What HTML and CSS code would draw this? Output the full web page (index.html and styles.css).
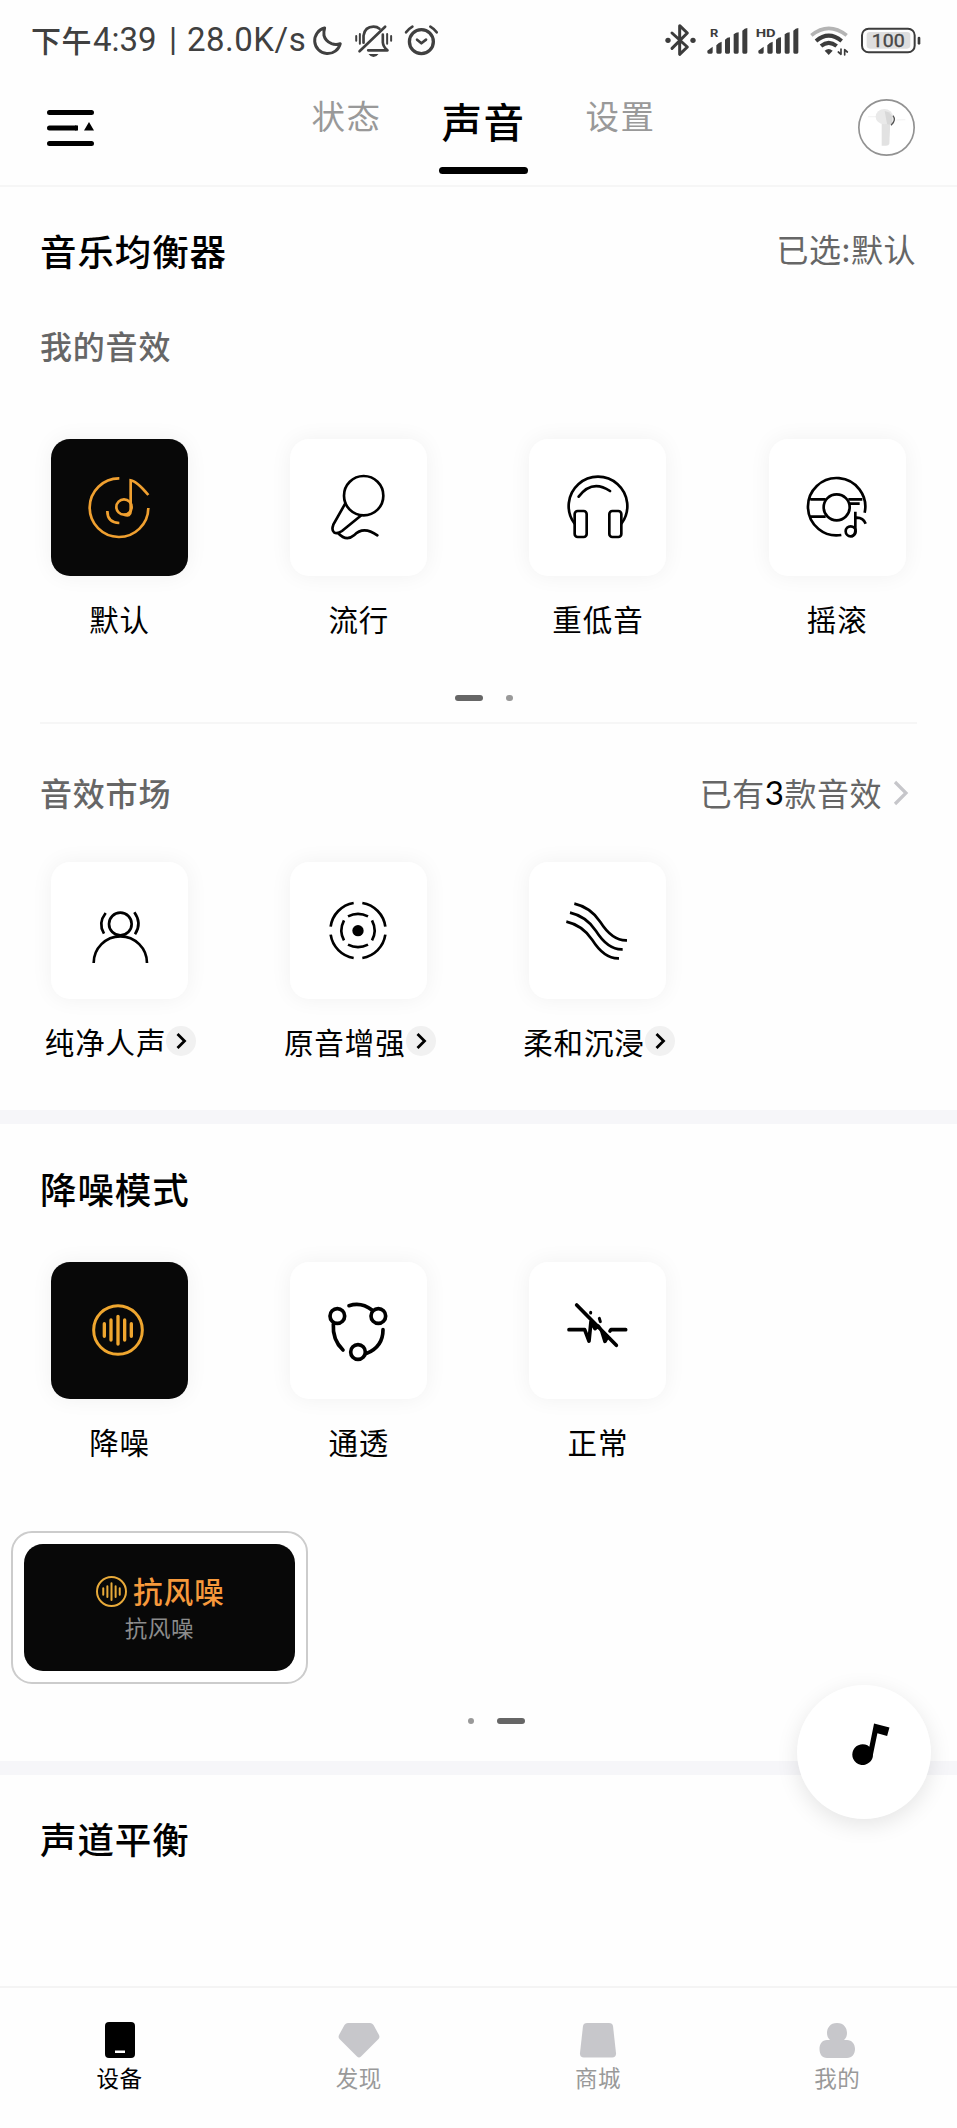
FILE: index.html
```html
<!DOCTYPE html>
<html lang="zh-CN">
<head>
<meta charset="utf-8">
<title>声音</title>
<link rel="stylesheet" href="styles.css">
</head>
<body>
<div class="app">
  <div class="status">
    <div class="status-left"><span class="status-cjk">下午</span><span class="status-time">4:39</span><span class="status-bar">|</span><span class="status-rate">28.0K/s</span></div>
    <svg class="status-modes" viewBox="930 60 400 120" fill="none" stroke="#404040" stroke-width="9" stroke-linecap="round" stroke-linejoin="round">
      <path d="M974 84A39 39 0 1 0 1021 131Q1008 136 995 131Q976 123 972 106Q971 93 974 84Z"/>
      <path d="M1079 154L1156 80" stroke-width="8"/>
      <path d="M1091 128V107Q1095 80 1121 80Q1132 80 1139 86M1149 104V127Q1150 140 1163 151H1105" stroke-width="8"/>
      <path d="M1106 162H1136Q1130 171 1121 171Q1112 171 1106 162Z" fill="#404040" stroke="none"/>
      <path d="M1069 108V122M1080 102V131M1162 102V131M1174 108V122" stroke-width="6"/>
      <circle cx="1265" cy="125" r="36" stroke-width="10"/>
      <path d="M1252 119L1265 130L1279 119M1219 97Q1226 87 1238 80M1292 80Q1304 87 1311 97" stroke-width="8"/>
    </svg>
    <svg class="status-system" viewBox="560 60 780 120" fill="none" stroke="#3c3c3c" stroke-linecap="round" stroke-linejoin="round">
      <path d="M584 99L630 141L607 163V77L630 99L584 145" stroke-width="9"/>
      <circle cx="572" cy="121" r="8" fill="#3c3c3c" stroke="none"/><circle cx="647" cy="121" r="8" fill="#3c3c3c" stroke="none"/>
      <g fill="#3c3c3c" stroke="none">
        <path id="bars" d="M690 152L706 140V157Q706 161 702 161H694Q690 161 690 157ZM717 136Q724 127 733 125V157Q733 161 729 161H721Q717 161 717 157ZM743 119Q750 112 758 112V157Q758 161 754 161H747Q743 161 743 157ZM769 103Q776 97 784 97V157Q784 161 780 161H773Q769 161 769 157ZM795 92Q802 85 810 84V157Q810 161 806 161H799Q795 161 795 157Z"/>
        <use href="#bars" x="153"/>
        <text x="698" y="111" class="sys-tag" textLength="25" lengthAdjust="spacingAndGlyphs">R</text>
        <text x="835" y="111" class="sys-tag" textLength="60" lengthAdjust="spacingAndGlyphs">HD</text>
        <path d="M1042 152Q1054 142 1066 152L1054 165Z"/>
      </g>
      <path d="M1002 106Q1054 64 1108 106" stroke="#b4b4b4" stroke-width="11" stroke-linecap="butt"/>
      <path d="M1016 123Q1054 91 1093 123M1031 138Q1054 119 1078 138" stroke-width="12" stroke-linecap="butt"/>
      <path d="M1091 147V163L1083 156M1102 165V149L1110 156" stroke-width="5"/>
      <rect x="1168" y="96" width="131" height="50" rx="10" fill="#dedede" stroke="none"/>
      <rect x="1154" y="86" width="158" height="71" rx="20" stroke-width="6"/>
      <path d="M1325 114V130" stroke-width="8"/>
      <text x="1183" y="142" class="sys-battery" textLength="99" lengthAdjust="spacingAndGlyphs">100</text>
    </svg>
  </div>

  <header class="header">
    <svg class="menu" viewBox="0 0 47 36"><path d="M2.5 2.5H44.5M2.5 18H28.5M2.5 33.5H44.5" stroke="#000" stroke-width="5" stroke-linecap="round"/><path d="M28 15.5H31V20.5H28ZM42 12L47 20.5H37Z"/></svg>
    <nav class="tabs">
      <a class="tab">状态</a>
      <a class="tab tab-active">声音</a>
      <a class="tab">设置</a>
    </nav>
    <svg class="avatar" viewBox="0 0 171 171">
      <circle cx="85.500" cy="85.500" r="83" fill="#fff" stroke="#929292" stroke-width="5"/>
      <path d="M30 53H60M115 63L142 62" stroke="#ececec" stroke-width="2"/>
      <path d="M71 68L97 65L94 135Q92 140 84 140H71Z" fill="#e2e2e2"/>
      <ellipse cx="79" cy="53" rx="26" ry="23" fill="#e9e9e9"/>
      <path d="M80 36Q107 40 104 72Q94 80 87 74Z" fill="#d8d8d8"/>
      <path d="M105 50Q116 64 99 79" fill="none" stroke="#555" stroke-width="4"/>
    </svg>
  </header>

  <main>
    <section class="equalizer">
      <div class="row row-title"><h2>音乐均衡器</h2><span class="hint">已选:默认</span></div>
      <h3 class="mine">我的音效</h3>
      <div class="grid">
        <div class="item">
          <div class="tile tile-dark"><svg viewBox="155 717 411 411" fill="none" stroke="#f0a030" stroke-width="8">
            <path d="M360 835A88 88 0 1 0 447 924M324 933Q324 968 360 969"/>
            <circle cx="374" cy="921" r="23"/>
            <path d="M374 944Q394 951 394 934V841Q412 843 447 885"/></svg></div>
          <span class="label">默认</span>
        </div>
        <div class="item">
          <div class="tile"><svg viewBox="874 717 411 411" fill="none" stroke="#000" stroke-width="8" stroke-linecap="round">
            <circle cx="1095" cy="887" r="59"/>
            <path d="M1040 910L1004 974Q998 990 1006 997Q1016 1003 1030 993L1088 946M1018 999Q1043 1026 1066 1006Q1094 976 1136 1006"/></svg></div>
          <span class="label">流行</span>
        </div>
        <div class="item">
          <div class="tile"><svg viewBox="160 717 411 411" fill="none" stroke="#000" stroke-width="8" stroke-linecap="round">
            <path d="M296 970A88 88 0 1 1 438 970M309 890Q349 837 403 873"/>
            <rect x="297" y="933" width="36" height="78" rx="9"/><rect x="401" y="933" width="36" height="78" rx="9"/></svg></div>
          <span class="label">重低音</span>
        </div>
        <div class="item">
          <div class="tile"><svg viewBox="877 717 411 411" fill="none" stroke="#000" stroke-width="8">
            <path d="M1094 1005A86 86 0 1 1 1164 938M1001 898H1047M1115 898H1157M1117 911H1149M1001 950H1047"/>
            <circle cx="1080" cy="922" r="39"/>
            <circle cx="1122" cy="994" r="15"/><path d="M1124 1009Q1136 1006 1136 990V935M1136 953Q1159 951 1167 971"/></svg></div>
          <span class="label">摇滚</span>
        </div>
      </div>
      <div class="pager"><i class="bar"></i><i class="dot"></i></div>
    </section>

    <section class="market">
      <div class="row row-sub"><h3>音效市场</h3><span class="hint">已有<b>3</b>款音效<svg class="more" viewBox="0 0 16 26"><path d="M2 2L13 13L2 24" fill="none" stroke="#c6c6ca" stroke-width="3.200"/></svg></span></div>
      <div class="grid">
        <div class="item">
          <div class="tile"><svg viewBox="155 636 411 411" fill="none" stroke="#000" stroke-width="8">
            <circle cx="363" cy="822" r="34"/>
            <path d="M283 939A80 80 0 0 1 443 939M319 789Q295 820 314 851M405 787Q429 820 407 853"/></svg></div>
          <span class="label">纯净人声<svg class="badge" viewBox="0 0 30 30"><circle cx="15" cy="15" r="15" fill="#f1f1f1"/><path d="M11.500 8L18.500 15L11.500 22" fill="none" stroke="#000" stroke-width="2.800"/></svg></span>
        </div>
        <div class="item">
          <div class="tile"><svg viewBox="874 636 411 411" fill="none" stroke="#000" stroke-width="8">
            <circle cx="1078" cy="842" r="17" fill="#000" stroke="none"/>
            <path d="M1065 759A83 83 0 0 0 996 830M1091 759A83 83 0 0 1 1160 830M996 854A83 83 0 0 0 1065 924M1160 854A83 83 0 0 1 1091 924"/>
            <path d="M1048 799Q1078 784 1108 799M1048 884Q1078 899 1108 884M1036 811Q1020 842 1036 871M1120 811Q1136 842 1120 871"/></svg></div>
          <span class="label">原音增强<svg class="badge" viewBox="0 0 30 30"><circle cx="15" cy="15" r="15" fill="#f1f1f1"/><path d="M11.500 8L18.500 15L11.500 22" fill="none" stroke="#000" stroke-width="2.800"/></svg></span>
        </div>
        <div class="item">
          <div class="tile"><svg viewBox="160 636 411 411" fill="none" stroke="#000" stroke-width="8">
            <path d="M296 761Q345 772 374 816Q410 873 454 871M283 788Q332 799 361 843Q397 900 441 898M272 815Q321 826 350 870Q386 927 430 925"/></svg></div>
          <span class="label">柔和沉浸<svg class="badge" viewBox="0 0 30 30"><circle cx="15" cy="15" r="15" fill="#f1f1f1"/><path d="M11.500 8L18.500 15L11.500 22" fill="none" stroke="#000" stroke-width="2.800"/></svg></span>
        </div>
      </div>
    </section>

    <section class="noise">
      <h2>降噪模式</h2>
      <div class="grid">
        <div class="item">
          <div class="tile tile-dark"><svg viewBox="155 394 411 411" fill="none" stroke="#efa62f" stroke-width="10" stroke-linecap="round">
            <circle cx="356" cy="598" r="73" stroke-width="9"/>
            <path d="M315 579V617M335 568V628M356 557V640M376 568V628M396 579V617"/></svg></div>
          <span class="label">降噪</span>
        </div>
        <div class="item">
          <div class="tile"><svg viewBox="874 394 411 411" fill="none" stroke="#000" stroke-width="11" stroke-linecap="round">
            <circle cx="1016" cy="556" r="22"/><circle cx="1139" cy="556" r="22"/><circle cx="1078" cy="664" r="22"/>
            <path d="M1051 525Q1088 513 1120 538M1004 580Q1001 628 1033 658M1153 597Q1153 648 1104 668"/></svg></div>
          <span class="label">通透</span>
        </div>
        <div class="item">
          <div class="tile"><svg viewBox="160 394 411 411" fill="none" stroke="#000" stroke-width="11" stroke-linecap="round" stroke-linejoin="round">
            <path d="M280 597H327L340 631L346 572L358 594L367 586L378 600L388 632L396 618M403 601L406 597H450M303 523L422 644"/>
            <path d="M345 545V547M371 563L374 573" stroke-width="9"/></svg></div>
          <span class="label">正常</span>
        </div>
      </div>
      <div class="wind">
        <div class="wind-card">
          <div class="wind-main"><svg viewBox="0 0 94 94" fill="none" stroke="#e8aa3a" stroke-width="6" stroke-linecap="round"><circle cx="47" cy="47" r="44"/><path d="M22 37V57M34.500 31V64M47 22V73M59.500 31V64M72 37V57"/></svg><span>抗风噪</span></div>
          <div class="wind-sub">抗风噪</div>
        </div>
      </div>
      <div class="pager pager-noise"><i class="dot"></i><i class="bar"></i></div>
    </section>

    <section class="balance"><h2>声道平衡</h2></section>
  </main>

  <button class="fab" aria-label="音乐"><svg viewBox="960 555 400 400"><path d="M1190 670L1236 682L1229 707L1200 699L1187 762A31 31 0 1 1 1176 739Z"/></svg></button>

  <footer class="bottom">
    <a class="nav nav-active"><svg viewBox="0 0 42 36"><rect x="6" width="30" height="36" rx="4"/><path d="M16 28.500H26V31H16Z" fill="#fff"/></svg>设备</a>
    <a class="nav"><svg viewBox="0 0 42 36"><path d="M10 1H32Q34 1 35.500 3L41 13Q42 15.500 40.500 17L23 34.500Q21 36.500 19 34.500L1.500 17Q0 15.500 1 13L6.500 3Q8 1 10 1Z"/></svg>发现</a>
    <a class="nav"><svg viewBox="0 0 42 36"><path d="M10 1H32Q35.500 1 36 4L39 31Q39.500 35.500 35 35.500H7Q2.500 35.500 3 31L6 4Q6.500 1 10 1Z"/></svg>商城</a>
    <a class="nav"><svg viewBox="0 0 42 36"><path d="M21 1C28 1 31 6 31 11C31 14 30 16 28 18H31C36 18 39 22 39 27C39 32 36 36 31 36H11C6 36 3.500 32 3.500 27C3.500 22 6 18 11 18H14C12 16 11 14 11 11C11 6 14 1 21 1Z"/></svg>我的</a>
  </footer>
</div>
</body>
</html>
```
FILE: styles.css
```css
* { box-sizing: border-box; }
body { margin: 0; background: #fefefe; color: #000; font-family: "Noto Sans CJK SC", sans-serif; }
h2, h3 { margin: 0; font-weight: 500; }
svg { display: block; flex: none; }
.app { position: relative; width: 957px; height: 2128px; display: flex; flex-direction: column; overflow: hidden; }

.status { height: 80px; padding: 20px 33px 20px 31px; display: flex; align-items: center; }
.status-left { width: 279px; display: flex; align-items: center; color: #404040; white-space: nowrap; font: 33px/40px Roboto, sans-serif; }
.status-cjk { font: 500 30px/38px "Noto Sans CJK SC", sans-serif; width: 62px; padding-bottom: 2px; letter-spacing: .6px; }
.status-time { width: 76px; letter-spacing: 0; }
.status-bar { width: 18px; }
.status-rate { letter-spacing: .5px; }
.status-modes { width: 133px; height: 40px; }
.status-system { width: 260px; height: 40px; margin-left: auto; }
.sys-tag { font: 700 34px Roboto, sans-serif; }
.sys-battery { font: 400 54px Roboto, sans-serif; fill: #4a4a4a; }

.header { height: 107px; padding: 0 42px 0 47px; display: flex; justify-content: space-between; align-items: flex-start; border-bottom: 2px solid #f6f6f6; }
.menu { width: 47px; height: 36px; margin-top: 30px; }
.tabs { display: flex; align-items: flex-start; margin-left: 15px; }
.tab { width: 137px; padding-top: 10px; text-align: center; font-size: 33.500px; line-height: 50px; letter-spacing: 1.500px; color: #999; }
.tab-active { width: 89px; margin: 0 24px; font-size: 40.500px; line-height: 62px; font-weight: 500; color: #000; }
.tab-active::after { content: ""; display: block; height: 7px; margin-top: 15px; border-radius: 4px; background: #000; }
.avatar { width: 57px; height: 57px; margin-top: 19px; }

h2 { font-size: 36.500px; line-height: 50px; letter-spacing: .9px; padding-left: 40px; }
h3 { font-size: 32px; line-height: 44px; letter-spacing: .8px; color: #666; padding-left: 40px; }
.row { display: flex; justify-content: space-between; align-items: flex-start; padding-right: 41px; }
.hint { font-size: 32px; line-height: 44px; color: #666; letter-spacing: .5px; display: flex; align-items: center; }
.hint b { font: 33px/44px Lato, sans-serif; color: #000; }
.more { width: 16px; height: 26px; margin: 2px 7px 0 11px; }

.equalizer { height: 536px; padding-top: 39px; }
.row-title { height: 61px; }
.mine { margin-top: 36px; }
.grid { display: grid; grid-template-columns: repeat(4, 239.200px); }
.equalizer .grid { margin-top: 72px; }
.item { display: flex; flex-direction: column; align-items: center; }
.tile { width: 137px; height: 137px; border-radius: 19px; background: #fff; box-shadow: 0 0 22px rgba(0, 0, 0, .055); }
.tile svg { width: 137px; height: 137px; }
.tile-dark { background: #080808; }
.label { display: flex; align-items: center; height: 44px; margin-top: 20px; font-size: 29.500px; line-height: 44px; letter-spacing: .9px; white-space: nowrap; }
.badge { width: 30px; height: 30px; }

.pager { display: flex; align-items: center; justify-content: center; gap: 23px; height: 8px; margin-top: 54px; padding-left: 11px; }
.bar { width: 28px; height: 6.500px; border-radius: 4px; background: #666; }
.dot { width: 6.500px; height: 6.500px; border-radius: 50%; background: #999; }

.market { height: 388px; margin-top: -1px; padding-top: 48px; background: linear-gradient(#f6f6f6, #f6f6f6) 40px 0 / 877px 2px no-repeat; }
.row-sub { height: 44px; }
.market .grid { margin-top: 48px; }
.market .label { margin-left: 2px; }

.noise { height: 651px; padding-top: 40px; border-top: 14px solid #f6f6f9; }
.noise .grid { margin-top: 48px; }
.wind { width: 297px; height: 153px; margin: 68px 0 0 11px; padding: 11px; border: 2px solid #ccc; border-radius: 21px; background: #fff; }
.wind-card { width: 271px; height: 127px; border-radius: 19px; background: #080808; display: flex; flex-direction: column; align-items: center; }
.wind-main { display: flex; align-items: center; gap: 6px; height: 40px; margin: 27px 0 0 2px; color: #f6993c; font-weight: 500; font-size: 29.500px; line-height: 40px; letter-spacing: 1.100px; }
.wind-main span { margin-top: -2px; }
.wind-main svg { width: 31px; height: 31px; }
.wind-sub { font-size: 22.500px; line-height: 32px; color: #8c8c8c; letter-spacing: .7px; }
.pager-noise { margin-top: 33px; padding-left: 36px; }

.balance { padding-top: 39px; border-top: 14px solid #f6f6f9; }

.fab { position: absolute; left: 797px; top: 1685px; width: 134px; height: 134px; padding: 0; border: 0; border-radius: 50%; background: #fff; box-shadow: 0 6px 22px rgba(0, 0, 0, .1); }
.fab svg { width: 134px; height: 134px; }

.bottom { margin-top: auto; height: 142px; padding-top: 34px; display: flex; border-top: 2px solid #f4f4f4; background: #fefefe; }
.nav { flex: 1; display: flex; flex-direction: column; align-items: center; gap: 3px; font-size: 22.500px; line-height: 32px; letter-spacing: .5px; color: #999; }
.nav svg { width: 42px; height: 36px; fill: #c7c7cb; }
.nav-active { color: #000; }
.nav-active svg { fill: #000; }
```
